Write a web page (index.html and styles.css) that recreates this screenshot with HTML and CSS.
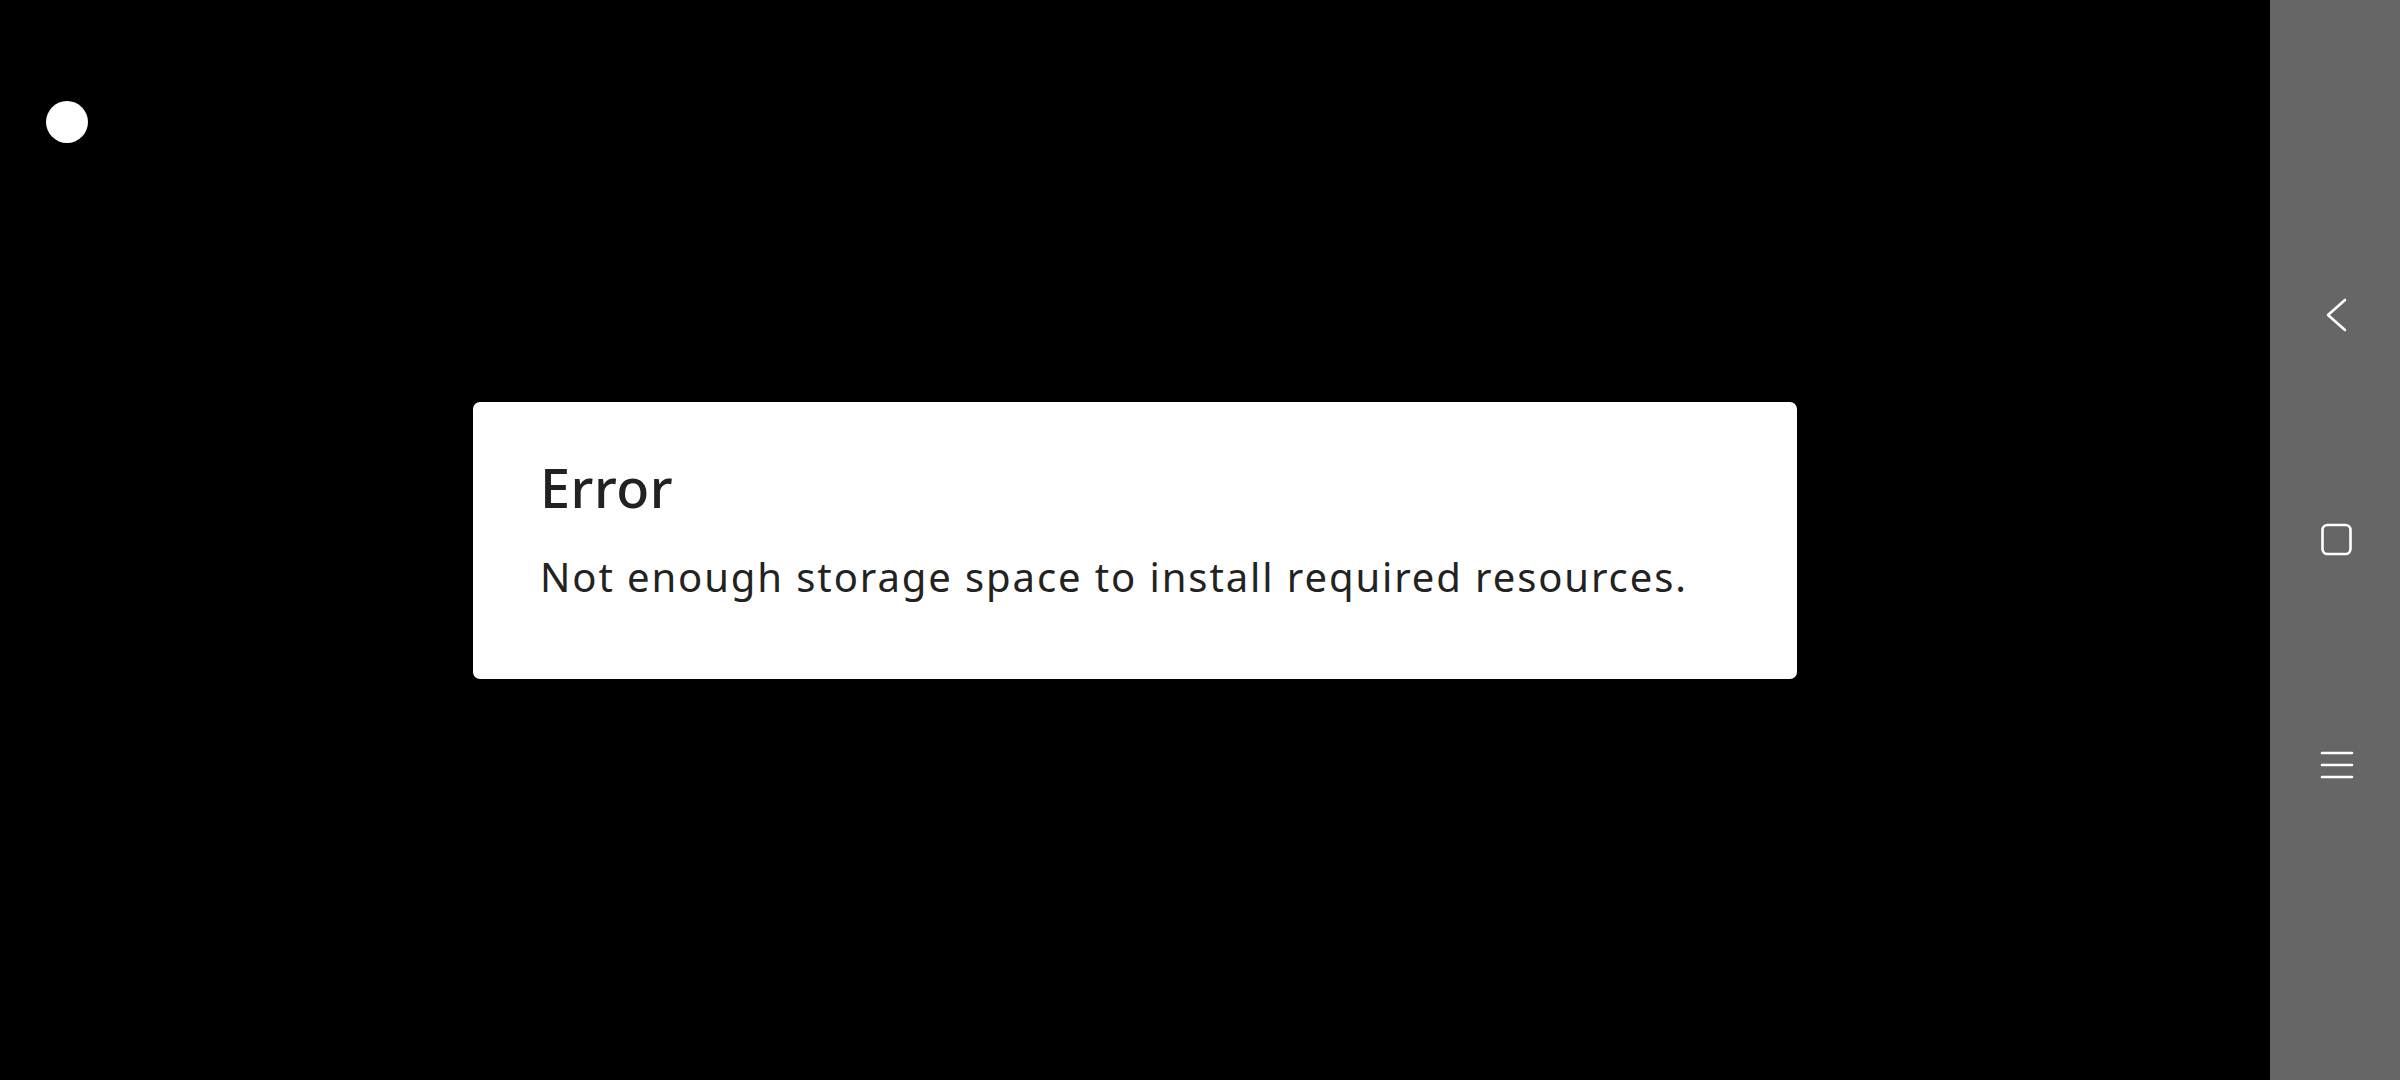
FILE: index.html
```html
<!DOCTYPE html>
<html lang="en">
<head>
    <meta charset="UTF-8">
    <meta name="viewport" content="width=device-width, initial-scale=1.0">
    <title>Error</title>
    <link rel="stylesheet" href="styles.css">
</head>
<body>

    <div class="screen">
        <div class="stage">
            <span class="dot"></span>

            <div class="dialog">
                <h1>Error</h1>
                <p>Not enough storage space to install required resources.</p>
            </div>
        </div>

        <div class="navbar">
            <svg class="nav-icon" width="40" height="40" viewBox="0 0 40 40">
                <path d="M28 5 L11 20 L28 35" fill="none" stroke="#fff" stroke-width="2.6" stroke-linecap="round" stroke-linejoin="round"/>
            </svg>
            <svg class="nav-icon" width="40" height="40" viewBox="0 0 40 40">
                <rect x="5.5" y="5" width="28" height="29" rx="5" fill="none" stroke="#fff" stroke-width="2.6"/>
            </svg>
            <svg class="nav-icon" width="40" height="40" viewBox="0 0 40 40">
                <path d="M5 8 H35 M5 20 H35 M5 32 H35" fill="none" stroke="#fff" stroke-width="2.6" stroke-linecap="round"/>
            </svg>
        </div>
    </div>

</body>
</html>
```

FILE: styles.css
```css
html, body {
    margin: 0;
    height: 100%;
}
body {
    background-color: #000;
    font-family: "Noto Sans", "Open Sans", sans-serif;
    color: #222;
}
.screen {
    display: flex;
    height: 100vh;
}
.stage {
    position: relative;
    flex: 1;
    display: flex;
    align-items: center;
    justify-content: center;
}
.dot {
    position: absolute;
    left: 46px;
    top: 101px;
    width: 42px;
    height: 42px;
    border-radius: 50%;
    background: #fff;
}
.dialog {
    width: 1324px;
    height: 277px;
    box-sizing: border-box;
    padding: 53px 67px 0;
    background: #fff;
    border-radius: 7px;
}
.dialog h1 {
    margin: 0;
    font-size: 54px;
    font-weight: 500;
    line-height: 64px;
    letter-spacing: 0.5px;
    color: #222;
}
.dialog p {
    margin: 30px 0 0;
    font-size: 40px;
    line-height: 56px;
    letter-spacing: 1.9px;
    color: #222;
}
.navbar {
    width: 130px;
    box-sizing: border-box;
    padding-left: 4px;
    background-color: #666;
    display: flex;
    flex-direction: column;
    align-items: center;
    justify-content: center;
    gap: 185px;
}
.nav-icon {
    display: block;
}
```
